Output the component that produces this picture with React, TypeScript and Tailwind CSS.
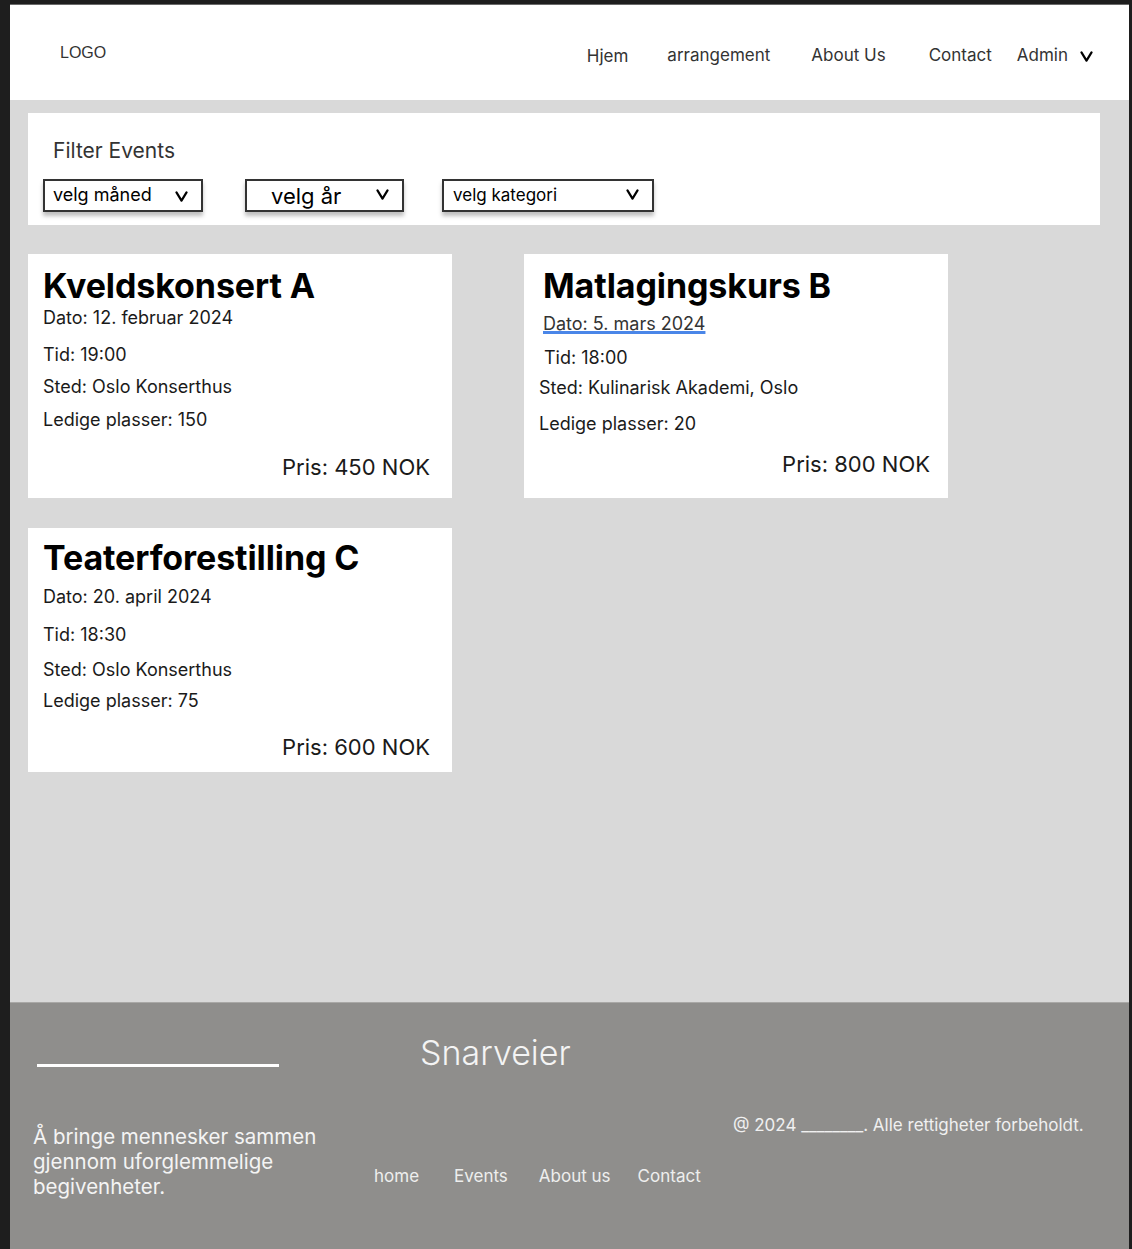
import React from "react";

const Chevron = ({ className = "" }: { className?: string }) => (
  <svg viewBox="0 0 14 12" className={className} fill="none" stroke="currentColor" strokeWidth="2.4" strokeLinecap="round" strokeLinejoin="round">
    <polyline points="1.5,1.5 7,10.5 12.5,1.5" />
  </svg>
);

type Line = { text: string; mt: number; ml?: number; underline?: boolean };

const Card = ({
  title,
  pt,
  titleMl = 0,
  lines,
  price,
  priceMt,
  pr,
}: {
  title: string;
  pt: number;
  titleMl?: number;
  lines: Line[];
  price: string;
  priceMt: number;
  pr: number;
}) => (
  <div className="w-[424px] h-[244px] bg-white flex flex-col pl-[15px]" style={{ paddingTop: pt, paddingRight: pr }}>
    <div className="text-[34px] leading-[38px] font-bold text-black tracking-[-0.1px]" style={{ marginLeft: titleMl }}>
      {title}
    </div>
    {lines.map((l, i) => (
      <div key={i} className="text-[18px] leading-[22px] text-[#1a1a1a]" style={{ marginTop: l.mt, marginLeft: l.ml ?? 0 }}>
        {l.underline ? (
          <span className="text-[#333] underline decoration-[#4a86e8] decoration-[3px] underline-offset-[1px]">{l.text}</span>
        ) : (
          l.text
        )}
      </div>
    ))}
    <div className="text-[22px] leading-[26px] text-[#1a1a1a] text-right" style={{ marginTop: priceMt }}>
      {price}
    </div>
  </div>
);

export default function App() {
  return (
    <div className="bg-[#1e1e1e] pl-[10px] pt-[4px] pr-[3px] min-h-[1249px]" style={{ fontFamily: "Inter, 'Noto Sans', sans-serif" }}>
      <div className="w-[1119px] flex flex-col">
        {/* Header */}
        <header className="h-[96px] bg-white border-t border-[#6a6a6a] flex items-start justify-between pl-[50px] pr-[36px]">
          <div className="mt-[39px] text-[16px] leading-[18px] text-[#333]" style={{ fontFamily: "'Liberation Sans', Arial, sans-serif" }}>
            LOGO
          </div>
          <nav className="mt-[38px] flex items-center text-[17px] leading-[22px] text-[#333]">
            <span className="mt-[2px]">Hjem</span>
            <span className="ml-[39px]">arrangement</span>
            <span className="ml-[41px]">About Us</span>
            <span className="ml-[43px]">Contact</span>
            <span className="ml-[25px]">Admin</span>
            <Chevron className="ml-[12px] mt-[3px] w-[13px] h-[11px] text-black" />
          </nav>
        </header>

        {/* Main */}
        <main className="h-[902px] bg-[#d9d9d9] pl-[18px] pt-[13px] flex flex-col">
          <section className="w-[1072px] h-[112px] bg-white pl-[15px] pt-[25px] flex flex-col">
            <div className="ml-[10px] text-[21px] leading-[26px] text-[#333]">Filter Events</div>
            <div className="mt-[15px] flex items-start">
              <div className="w-[160px] h-[33px] border-2 border-[#333] bg-white shadow-[0_4px_4px_rgba(0,0,0,0.25)] flex items-center pl-[8px] pr-[13px] justify-between">
                <span className="text-[18px] leading-[22px] text-black -mt-[2px]">velg måned</span>
                <Chevron className="w-[13px] h-[11px] mt-[2px] text-black" />
              </div>
              <div className="ml-[42px] w-[159px] h-[33px] border-2 border-[#333] bg-white shadow-[0_4px_4px_rgba(0,0,0,0.25)] flex items-center pl-[24px] pr-[13px] justify-between">
                <span className="text-[22px] leading-[26px] text-black">velg år</span>
                <Chevron className="w-[13px] h-[11px] -mt-[2px] text-black" />
              </div>
              <div className="ml-[38px] w-[212px] h-[33px] border-2 border-[#333] bg-white shadow-[0_4px_4px_rgba(0,0,0,0.25)] flex items-center pl-[9px] pr-[13px] justify-between">
                <span className="text-[17px] leading-[22px] text-black -mt-[2px]">velg kategori</span>
                <Chevron className="w-[13px] h-[11px] -mt-[2px] text-black" />
              </div>
            </div>
          </section>

          <div className="mt-[29px] flex items-start">
            <Card
              title="Kveldskonsert A"
              pt={13}
              lines={[
                { text: "Dato: 12. februar 2024", mt: 2 },
                { text: "Tid: 19:00", mt: 15 },
                { text: "Sted: Oslo Konserthus", mt: 10 },
                { text: "Ledige plasser: 150", mt: 11 },
              ]}
              price="Pris: 450 NOK"
              priceMt={23}
              pr={22}
            />
            <div className="ml-[72px]">
              <Card
                title="Matlagingskurs B"
                pt={13}
                titleMl={4}
                lines={[
                  { text: "Dato: 5. mars 2024", mt: 8, ml: 4, underline: true },
                  { text: "Tid: 18:00", mt: 12, ml: 5 },
                  { text: "Sted: Kulinarisk Akademi, Oslo", mt: 8 },
                  { text: "Ledige plasser: 20", mt: 14 },
                ]}
                price="Pris: 800 NOK"
                priceMt={16}
                pr={18}
              />
            </div>
          </div>

          <div className="mt-[30px]">
            <Card
              title="Teaterforestilling C"
              pt={11}
              lines={[
                { text: "Dato: 20. april 2024", mt: 9 },
                { text: "Tid: 18:30", mt: 16 },
                { text: "Sted: Oslo Konserthus", mt: 13 },
                { text: "Ledige plasser: 75", mt: 9 },
              ]}
              price="Pris: 600 NOK"
              priceMt={22}
              pr={22}
            />
          </div>
        </main>

        {/* Footer */}
        <footer className="h-[247px] bg-[#8f8e8c] border-t border-[#a9a8a6] flex pl-[23px] text-[#f4f4f4]">
          <div className="w-[341px] flex flex-col">
            <div className="ml-[4px] mt-[61px] w-[242px] h-[3px] bg-white" />
            <div className="mt-[57px] text-[20.5px] leading-[25px]">
              Å bringe mennesker sammen
              <br />
              gjennom uforglemmelige
              <br />
              begivenheter.
            </div>
          </div>
          <div className="w-[359px] flex flex-col">
            <div className="ml-[46px] mt-[30px] text-[34px] leading-[40px] font-light">Snarveier</div>
            <div className="mt-[92px] flex text-[17px] leading-[22px] text-[#eeeeee]">
              <span>home</span>
              <span className="ml-[35px]">Events</span>
              <span className="ml-[31px]">About us</span>
              <span className="ml-[27px]">Contact</span>
            </div>
          </div>
          <div className="pt-[111px] text-[17px] leading-[22px] text-[#f0f0f0]">
            @ 2024 ________. Alle rettigheter forbeholdt.
          </div>
        </footer>
      </div>
    </div>
  );
}
